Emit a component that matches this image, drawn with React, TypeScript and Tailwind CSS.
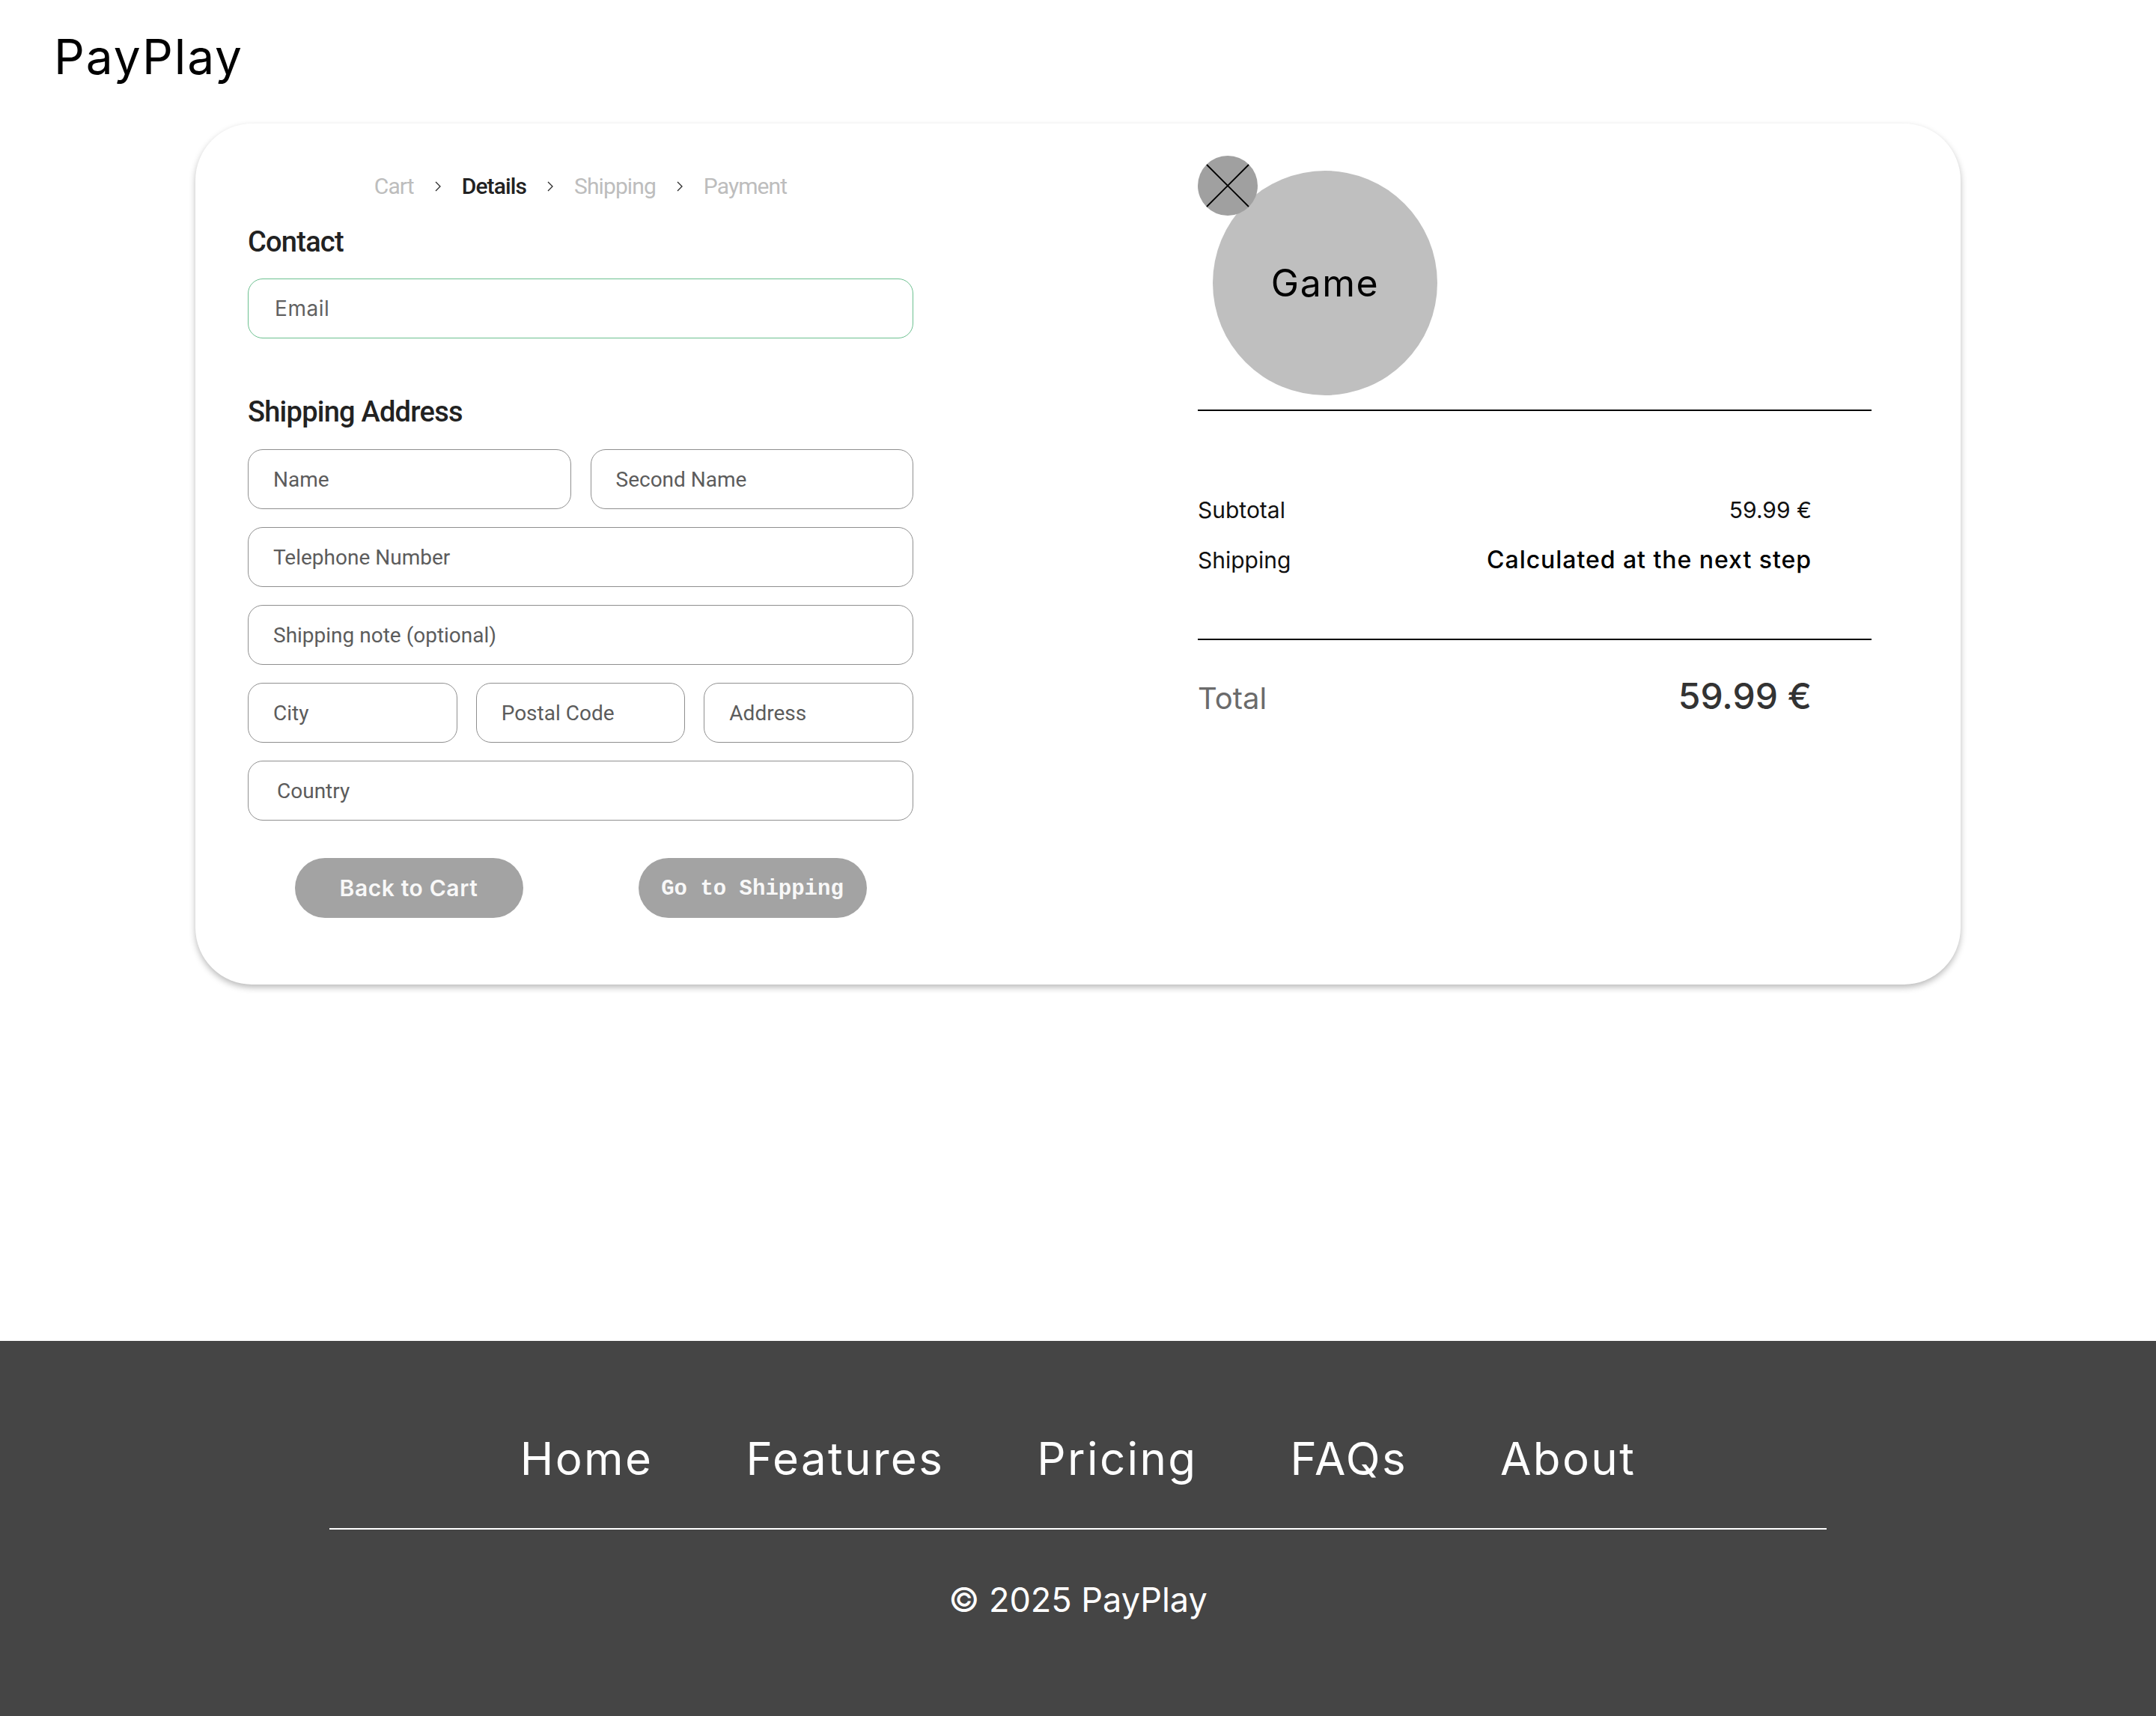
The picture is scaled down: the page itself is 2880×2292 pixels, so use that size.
import React from "react";

function Chevron() {
  return (
    <svg width="8" height="14" viewBox="0 0 8 14" fill="none" className="shrink-0">
      <path d="M1 1l6 6-6 6" stroke="#2b2b2b" strokeWidth="1.3" />
    </svg>
  );
}

function Field({ placeholder, className = "" }: { placeholder: string; className?: string }) {
  return (
    <input
      placeholder={placeholder}
      className={`h-[80px] w-full rounded-[20px] border-[1.5px] border-[#8f8f8f] bg-white pl-[33px] font-['Roboto',sans-serif] text-[28px] text-[#555] outline-none placeholder:text-[#5c5c5c] ${className}`}
    />
  );
}

const navLinks = ["Home", "Features", "Pricing", "FAQs", "About"];

export default function App() {
  return (
    <div className="min-h-[2292px] bg-white font-['Inter',sans-serif] text-black">
      <header className="h-[165px] pl-[72px] pt-[44px]">
        <span className="text-[64px] leading-[64px] tracking-[0.03em]">PayPlay</span>
      </header>

      <main className="pb-[476px]">
        <div className="mx-auto flex h-[1150px] w-[2358px] rounded-[76px] bg-white shadow-[0_4px_9px_rgba(0,0,0,0.27)]">
          {/* details form */}
          <div className="ml-[70px] w-[889px] pt-[66px]">
            <nav className="flex items-center justify-center gap-[28px] font-['Roboto',sans-serif] text-[30px] leading-[36px] tracking-[-0.03em] text-[#bdbdbd]">
              <span>Cart</span>
              <Chevron />
              <span className="font-medium text-[#222]">Details</span>
              <Chevron />
              <span>Shipping</span>
              <Chevron />
              <span>Payment</span>
            </nav>

            <h2 className="mt-[34px] font-['Roboto',sans-serif] text-[38px] font-medium leading-[44px] tracking-[-0.02em] text-[#222]">
              Contact
            </h2>
            <input
              placeholder="Email"
              className="mt-[27px] h-[80px] w-full rounded-[20px] border-[1.5px] border-[#6cc08f] bg-white pl-[35px] text-[28px] tracking-[0.02em] text-[#555] outline-none placeholder:text-[#616161]"
            />

            <h2 className="mt-[76px] font-['Roboto',sans-serif] text-[38px] font-medium leading-[44px] tracking-[-0.02em] text-[#222]">
              Shipping Address
            </h2>
            <div className="mt-[28px] flex flex-col gap-[24px]">
              <div className="grid grid-cols-2 gap-[26px]">
                <Field placeholder="Name" />
                <Field placeholder="Second Name" />
              </div>
              <Field placeholder="Telephone Number" />
              <Field placeholder="Shipping note (optional)" />
              <div className="grid grid-cols-3 gap-[25px]">
                <Field placeholder="City" />
                <Field placeholder="Postal Code" />
                <Field placeholder="Address" />
              </div>
              <Field placeholder="Country" className="pl-[38px]" />
            </div>

            <div className="mt-[50px] flex justify-center gap-[154px]">
              <button className="h-[80px] w-[305px] rounded-full bg-[#a3a3a3] text-[30px] font-semibold tracking-[0.02em] text-[#f8f8f8]">
                Back to Cart
              </button>
              <button className="h-[80px] w-[305px] rounded-full bg-[#a3a3a3] pt-[4px] font-['Liberation_Mono',monospace] text-[29px] font-bold text-[#f8f8f8]">
                Go to Shipping
              </button>
            </div>
          </div>

          {/* order summary */}
          <div className="ml-[380px] w-[900px] pt-[43px]">
            <div className="relative pl-[20px] pt-[20px]">
              <div className="flex h-[300px] w-[300px] items-center justify-center rounded-full bg-[#bfbfbf] text-[50px] tracking-[0.03em]">
                Game
              </div>
              <button className="absolute left-0 top-0 h-[80px] w-[80px] rounded-full bg-[#a0a0a0]" aria-label="Remove">
                <svg width="80" height="80" viewBox="0 0 80 80" fill="none">
                  <path d="M12 12l56 56M68 12L12 68" stroke="#000" strokeWidth="1.8" />
                </svg>
              </button>
            </div>
            <div className="mt-[19px] h-[2px] bg-black" />

            <div className="mt-[114px] pr-[80px] text-[30px] leading-[36px] text-[#111]">
              <div className="flex justify-between">
                <span>Subtotal</span>
                <span>59.99 €</span>
              </div>
              <div className="mt-[31px] flex items-baseline justify-between">
                <span>Shipping</span>
                <span className="text-[32px] font-medium tracking-[0.03em] text-black">Calculated at the next step</span>
              </div>
            </div>
            <div className="mt-[87px] h-[2px] bg-black" />

            <div className="mt-[47px] flex items-baseline justify-between pr-[80px] leading-[56px]">
              <span className="text-[40px] text-[#6b6b6b]">Total</span>
              <span className="text-[48px] font-medium text-[#333]">59.99 €</span>
            </div>
          </div>
        </div>
      </main>

      <footer className="h-[501px] bg-[#454545] pt-[121px] text-white">
        <nav className="flex justify-center gap-[124px] text-[60px] leading-[72px] tracking-[0.04em]">
          {navLinks.map((l) => (
            <a key={l} href="#">
              {l}
            </a>
          ))}
        </nav>
        <div className="mx-auto mt-[57px] h-[2px] w-[2000px] bg-white" />
        <p className="mt-[67px] text-center text-[45px] leading-[54px]">© 2025 PayPlay</p>
      </footer>
    </div>
  );
}
